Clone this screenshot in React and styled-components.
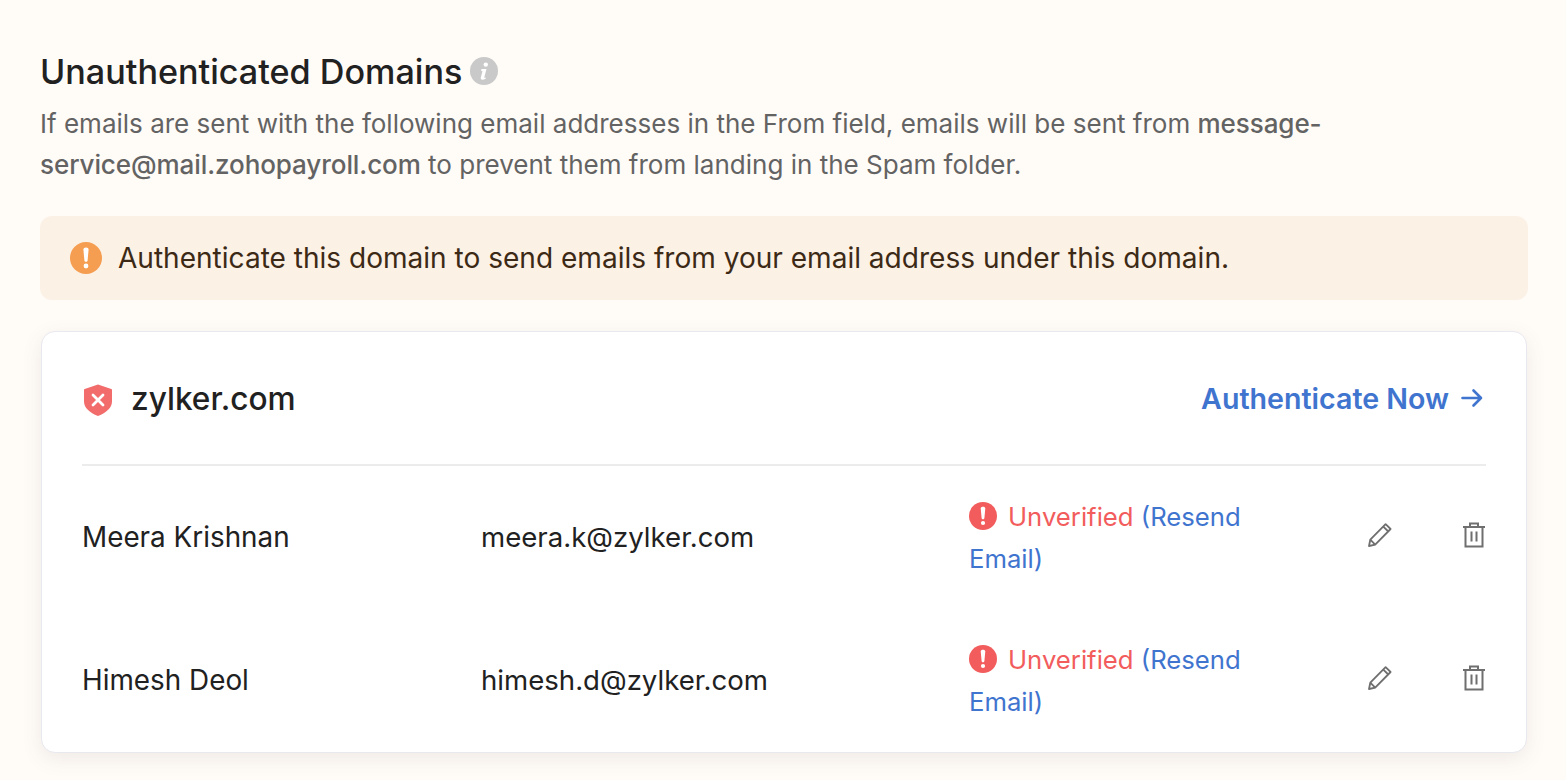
import React from 'react'
import styled, { createGlobalStyle } from 'styled-components'

const GlobalStyle = createGlobalStyle`
    html, body {
        margin: 0;
        padding: 0;
        background: #fffbf7;
    }
    body {
        font-family: Inter, "Liberation Sans", sans-serif;
    }
`

const people = [
    { name: 'Meera Krishnan', email: 'meera.k@zylker.com' },
    { name: 'Himesh Deol', email: 'himesh.d@zylker.com' },
]

const InfoIcon = () => (
    <svg width="28" height="28" viewBox="0 0 28 28">
        <circle cx="14" cy="14" r="14" fill="#c9c9c9" />
        <circle cx="15.8" cy="7.6" r="2.2" fill="#fff" />
        <path d="M11.5 12h5l-2.2 8.2c-.2.7.4.9 1.6.3l-.3 1.3c-1.2.7-2.3 1-3.2 1-1.4 0-2-.9-1.6-2.2l1.7-6.4-1.4-.5z" fill="#fff" />
    </svg>
)

const AlertIcon = ({ size, color }) => (
    <svg width={size} height={size} viewBox="0 0 32 32">
        <circle cx="16" cy="16" r="16" fill={color} />
        <path d="M13.4 7.4c0-1.3 1.1-2 2.6-2s2.6.7 2.6 2l-1 11c-.1.9-.7 1.4-1.6 1.4s-1.5-.5-1.6-1.4z" fill="#fff" />
        <circle cx="16" cy="24" r="2.4" fill="#fff" />
    </svg>
)

const ShieldIcon = () => (
    <ShieldSvg width="30" height="34" viewBox="0 0 30 34">
        <path d="M15 1.500 28.300 6c.4.1.7.5.7 1v11.500c0 6.300-5.500 11-14 14.500C6.500 29.500 1 24.800 1 18.500V7c0-.5.3-.9.700-1z" fill="#f26c6c" />
        <path d="M10 12l10 10M20 12 10 22" stroke="#fff" strokeWidth="2.800" strokeLinecap="round" />
    </ShieldSvg>
)

const ArrowIcon = () => (
    <svg width="22" height="20" viewBox="0 0 22 20" fill="none" stroke="#3f74cf" strokeWidth="2.600" strokeLinecap="round" strokeLinejoin="round">
        <path d="M1.500 10h18.500M12.500 2.500 20 10l-7.500 7.500" />
    </svg>
)

const PencilIcon = () => (
    <svg width="26" height="26" viewBox="0 0 26 26" fill="none" stroke="#6f6f6f" strokeWidth="1.800" strokeLinejoin="round">
        <path d="M2 24l1.300-6.300L18.600 2.200l5 4.800L8.200 22.600z" />
        <path d="M16.300 4.600l5 4.900M3.300 17.700l4.900 4.900" />
    </svg>
)

const TrashIcon = () => (
    <svg width="24" height="26" viewBox="0 0 24 26" fill="none" stroke="#6f6f6f" strokeWidth="2">
        <path d="M1 5h22M8 5V1.500h8V5M3.500 5v19.500h17V5M9.500 9.500v10M14.500 9.500v10" />
    </svg>
)

const Row = ({ name, email }) => (
    <PersonRow>
        <Name>{name}</Name>
        <Email>{email}</Email>
        <Status>
            <StatusMark><AlertIcon size={28} color="#f25c5c" /></StatusMark>
            <Unverified>Unverified</Unverified> <Resend>(Resend Email)</Resend>
        </Status>
        <Actions>
            <PencilIcon />
            <TrashIcon />
        </Actions>
    </PersonRow>
)

const App = () => (
    <Page>
        <GlobalStyle />
        <Heading>
            <Title>Unauthenticated Domains</Title>
            <InfoIcon />
        </Heading>
        <Description>
            If emails are sent with the following email addresses in the From field, emails will be sent from <b>message-service@mail.zohopayroll.com</b> to prevent them from landing in the Spam folder.
        </Description>
        <Banner>
            <AlertIcon size={32} color="#f59d51" />
            <BannerText>Authenticate this domain to send emails from your email address under this domain.</BannerText>
        </Banner>
        <Card>
            <CardHeader>
                <Domain>
                    <ShieldIcon />
                    <DomainName>zylker.com</DomainName>
                </Domain>
                <AuthLink>Authenticate Now <ArrowIcon /></AuthLink>
            </CardHeader>
            {people.map((p) => <Row key={p.email} {...p} />)}
        </Card>
    </Page>
)

const Page = styled.div`
    box-sizing: border-box;
    width: 1566px;
    height: 780px;
    padding: 49px 38px 0 40px;
    overflow: hidden;
    background: #fffbf7;
`

const Heading = styled.div`
    display: flex;
    align-items: center;
    gap: 8px;
    height: 44px;
`

const Title = styled.h1`
    margin: 0;
    font-size: 34.16px;
    font-weight: 500;
    color: #212121;
`

const Description = styled.p`
    margin: 10px 0 0;
    width: 1340px;
    font-size: 26.03px;
    line-height: 41px;
    color: #636363;

    b {
        font-weight: 500;
        letter-spacing: -0.08px;
    }
`

const Banner = styled.div`
    display: flex;
    align-items: center;
    gap: 16px;
    height: 84px;
    margin-top: 31px;
    padding: 0 30px;
    border-radius: 12px;
    background: #fcf1e5;
`

const BannerText = styled.span`
    font-size: 28.05px;
    color: #3c2a16;
`

const Card = styled.div`
    box-sizing: border-box;
    width: 1486px;
    height: 422px;
    margin: 31px 0 0 1px;
    padding: 0 40px;
    background: #fff;
    border: 1px solid #e8e8ef;
    border-radius: 14px;
    box-shadow: 0 6px 20px rgba(100, 90, 80, 0.1);
`

const CardHeader = styled.div`
    display: flex;
    align-items: center;
    justify-content: space-between;
    height: 132px;
    border-bottom: 2px solid #ececec;
`

const Domain = styled.div`
    display: flex;
    align-items: center;
    gap: 18px;
`

const ShieldSvg = styled.svg`
    margin: 4px 0 0 1px;
`

const DomainName = styled.span`
    font-size: 31.6px;
    font-weight: 500;
    color: #212121;
`

const AuthLink = styled.a`
    display: flex;
    align-items: center;
    gap: 12px;
    margin-right: 3px;
    font-size: 28.6px;
    font-weight: 600;
    color: #3f74cf;
`

const PersonRow = styled.div`
    display: grid;
    grid-template-columns: 399px 488px 1fr auto;
    align-items: center;
    height: 143px;
    color: #212121;
`

const Name = styled.div`
    margin-top: -2px;
    font-size: 27.85px;
`

const Email = styled.div`
    margin-top: -2px;
    font-size: 27.6px;
`

const Status = styled.div`
    width: 290px;
    font-size: 25.7px;
    line-height: 42px;
`

const StatusMark = styled.span`
    display: inline-block;
    height: 28px;
    margin: -6px 11px -6px 0;
    line-height: 0;
    vertical-align: -4px;
`

const Unverified = styled.span`
    color: #f25c5c;
`

const Resend = styled.span`
    color: #3f74cf;
`

const Actions = styled.div`
    display: flex;
    align-items: center;
    gap: 69px;
    margin-top: -6px;
`

export default App
